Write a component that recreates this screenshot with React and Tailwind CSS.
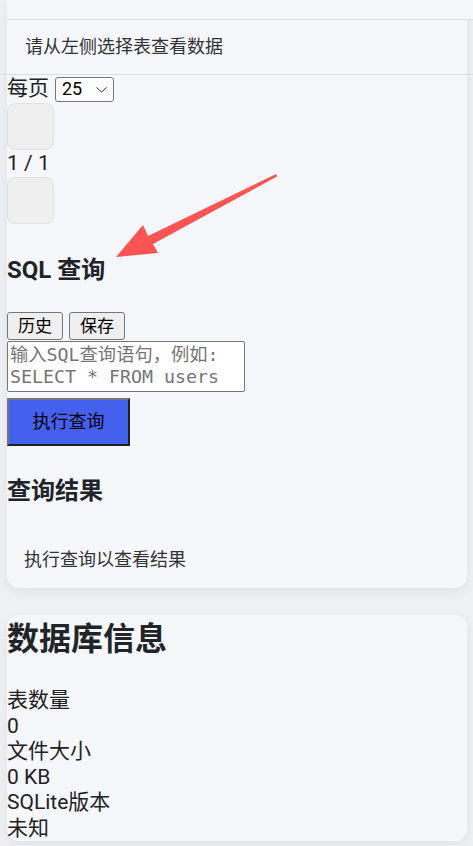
export default function App() {
  return (
    <div className="relative min-h-[846px] overflow-hidden bg-[#eff0f4] font-['Roboto','Noto_Sans_CJK_SC',sans-serif] text-[21px] leading-[25.5px] text-[#222]">
      {/* table / query card */}
      <div className="ml-[7px] w-[460px] rounded-b-xl bg-[#f6f7fb] shadow-[0_4px_12px_rgba(0,0,0,0.06)]">
        <div className="h-[20px] w-[466px] border-b border-[#dcdee3] bg-[#f6f7fb]" />
        <div className="flex h-[54px] items-center px-[18px] text-[18px] text-[#333]">
          请从左侧选择表查看数据
        </div>
        <div className="-ml-[7px] h-px w-[473px] bg-[#dcdee3]" />

        <div className="flex h-[28px] items-center gap-[6px]">
          <span>每页</span>
          <span className="relative">
            <select className="block h-[25px] w-[59px] appearance-none rounded-[3px] border border-[#767676] bg-white pl-[6px] text-[18px] leading-[20px] text-black">
              <option>25</option>
              <option>50</option>
              <option>100</option>
            </select>
            <svg className="pointer-events-none absolute top-[10px] right-[7px]" width="11" height="6" viewBox="0 0 11 6">
              <path d="M0.5 0.5 L5.5 5 L10.5 0.5" fill="none" stroke="#333" strokeWidth="1" />
            </svg>
          </span>
        </div>
        <button className="block h-[47px] w-[47px] rounded-lg border border-[#e0e1e5] bg-[#efefef]" />
        <div className="flex h-[27px] items-center">1 / 1</div>
        <button className="block h-[47px] w-[47px] rounded-lg border border-[#e0e1e5] bg-[#efefef]" />

        <h3 className="mt-[32px] mb-[28px] text-[24px] leading-[28px] font-bold text-[#212529]">SQL 查询</h3>
        <div className="flex gap-[6px]">
          <button className="h-[28px] w-[56px] rounded-[3px] border border-[#767676] bg-[#efefef] text-[17px] leading-[20px] text-black">
            历史
          </button>
          <button className="h-[28px] w-[56px] rounded-[3px] border border-[#767676] bg-[#efefef] text-[17px] leading-[20px] text-black">
            保存
          </button>
        </div>
        <textarea
          rows={2}
          placeholder={'输入SQL查询语句，例如: SELECT * FROM users'}
          className="mt-[1px] block h-[51px] w-[238px] resize-none rounded-[2px] border border-[#767676] bg-white p-[2px] font-['DejaVu_Sans_Mono','Noto_Sans_CJK_SC',monospace] text-[18.3px] leading-[22px] text-black placeholder:text-[#757575]"
        />
        <button className="mt-[6px] block h-[48px] w-[123px] border-2 border-t-[#767676] border-l-[#767676] border-r-[#1f1f1f] border-b-[#1f1f1f] bg-[#4361ee] text-[18px] text-black">
          执行查询
        </button>

        <h3 className="mt-[31px] mb-[24px] text-[24px] leading-[28px] font-bold text-[#212529]">查询结果</h3>
        <div className="px-[17px] pt-[18px] pb-[16px] text-[18px] leading-[25px] text-[#333]">
          执行查询以查看结果
        </div>
      </div>

      {/* database info card */}
      <div className="mt-[27px] ml-[7px] w-[460px] rounded-xl bg-[#f6f7fb] pt-[6px] shadow-[0_4px_12px_rgba(0,0,0,0.06)]">
        <h2 className="mb-[31px] text-[32px] leading-[36px] font-bold text-[#212529]">数据库信息</h2>
        <div>
          <div>表数量</div>
          <div>0</div>
        </div>
        <div>
          <div>文件大小</div>
          <div>0 KB</div>
        </div>
        <div>
          <div>SQLite版本</div>
          <div>未知</div>
        </div>
      </div>

      {/* annotation arrow */}
      <svg className="pointer-events-none absolute inset-0" width="473" height="846" viewBox="0 0 473 846">
        <polygon
          points="276,174 277,176.5 153,244 158,253 116,257 143,225 148,236"
          fill="#ff5454"
        />
      </svg>
    </div>
  );
}
